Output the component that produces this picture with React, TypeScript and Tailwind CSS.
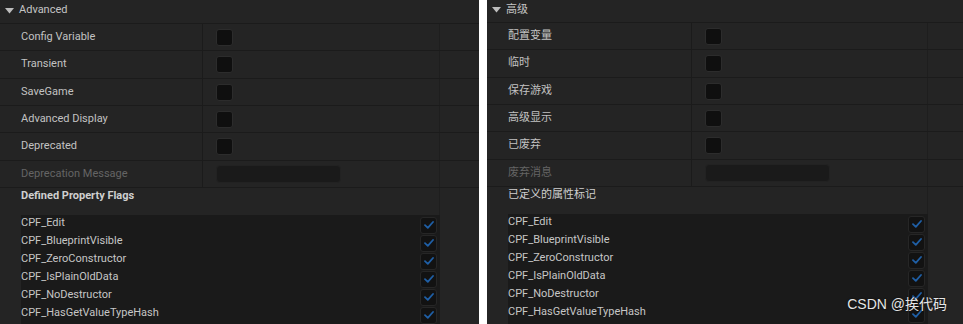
import React from "react";

type Row = { label: string; h: number; kind: "check" | "text"; muted?: boolean };

type PanelProps = {
  title: string;
  rows: Row[];
  flagsTitle: string;
  flagsBold?: boolean;
  flags: string[];
  width: number;
  labelW: number;
  valueW: number;
  headerH: number;
};

const font = { fontFamily: "Roboto, 'Noto Sans CJK SC', sans-serif" };

const CheckMark = () => (
  <svg width="10" height="8" viewBox="0 0 10 8" fill="none">
    <path d="M1 4.2 L3.8 6.8 L9 1" stroke="#1f5fa6" strokeWidth="1.8" strokeLinecap="round" strokeLinejoin="round" />
  </svg>
);

const Panel = ({ title, rows, flagsTitle, flagsBold, flags, width, labelW, valueW, headerH }: PanelProps) => {
  const cols = `${labelW}px ${valueW}px 1fr`;
  return (
    <div className="flex shrink-0 flex-col bg-[#242424] text-[11px]" style={{ width, ...font }}>
      <div
        className="flex items-center gap-[5px] border-b border-[#1b1b1b] pb-[2px] pl-[5px] text-[#c4c4c4]"
        style={{ height: headerH }}
      >
        <svg width="9" height="6" viewBox="0 0 9 6">
          <path d="M0 0 H9 L4.5 5.5 Z" fill="#bdbdbd" />
        </svg>
        <span>{title}</span>
      </div>

      {rows.map((row) => (
        <div
          key={row.label}
          className="grid border-b border-[#1b1b1b]"
          style={{ gridTemplateColumns: cols, height: row.h }}
        >
          <div
            className={`flex items-center border-r border-[#1b1b1b] pl-[21px] ${row.muted ? "text-[#656565]" : "text-[#c2c2c2]"}`}
          >
            {row.label}
          </div>
          <div className="flex items-center border-r border-[#1e1e1e] pl-[13px]">
            {row.kind === "check" ? (
              <div className="h-[17px] w-[17px] rounded-[3px] border border-[#2c2c2c] bg-[#0f0f0f]" />
            ) : (
              <div className="h-[18px] w-[125px] rounded-[4px] border border-[#222] bg-[#1a1a1a]" />
            )}
          </div>
          <div />
        </div>
      ))}

      <div className="grid h-[27px]" style={{ gridTemplateColumns: `${labelW + valueW}px 1fr` }}>
        <div className={`border-r border-[#1e1e1e] pl-[21px] text-[#cfcfcf] ${flagsBold ? "font-bold" : "font-normal"}`}>
          {flagsTitle}
        </div>
        <div />
      </div>

      <div className="grid flex-1" style={{ gridTemplateColumns: `${labelW + valueW}px 1fr` }}>
        <div className="ml-[21px] flex flex-col bg-[#1a1a1a] pt-[1px]">
          {flags.map((f) => (
            <div key={f} className="flex h-[18px] items-center justify-between pr-[3px] text-[#c6c6c6]">
              <span className="mb-[3px]">{f}</span>
              <div className="flex h-[17px] w-[17px] items-center justify-center rounded-[3px] border border-[#262626] bg-[#121212]">
                <CheckMark />
              </div>
            </div>
          ))}
        </div>
        <div />
      </div>
    </div>
  );
};

const flags = [
  "CPF_Edit",
  "CPF_BlueprintVisible",
  "CPF_ZeroConstructor",
  "CPF_IsPlainOldData",
  "CPF_NoDestructor",
  "CPF_HasGetValueTypeHash",
];

const enRows: Row[] = [
  { label: "Config Variable", h: 27, kind: "check" },
  { label: "Transient", h: 28, kind: "check" },
  { label: "SaveGame", h: 27, kind: "check" },
  { label: "Advanced Display", h: 27, kind: "check" },
  { label: "Deprecated", h: 28, kind: "check" },
  { label: "Deprecation Message", h: 27, kind: "text", muted: true },
];

const zhRows: Row[] = [
  { label: "配置变量", h: 27, kind: "check" },
  { label: "临时", h: 28, kind: "check" },
  { label: "保存游戏", h: 27, kind: "check" },
  { label: "高级显示", h: 27, kind: "check" },
  { label: "已废弃", h: 28, kind: "check" },
  { label: "废弃消息", h: 27, kind: "text", muted: true },
];

export default function App() {
  return (
    <div className="relative flex h-[324px] w-[963px] overflow-hidden bg-white">
      <Panel
        title="Advanced"
        rows={enRows}
        flagsTitle="Defined Property Flags"
        flagsBold
        flags={flags}
        width={479}
        labelW={203}
        valueW={237}
        headerH={24}
      />
      <div className="w-[8px] shrink-0 bg-white" />
      <Panel
        title="高级"
        rows={zhRows}
        flagsTitle="已定义的属性标记"
        flags={flags}
        width={476}
        labelW={205}
        valueW={236}
        headerH={23}
      />
      <div
        className="absolute bottom-[9px] right-[16px] text-[14px] text-[#e6e6e6] [text-shadow:0_0_2px_rgba(0,0,0,0.8)]"
        style={{ fontFamily: "'Liberation Sans', 'Noto Sans CJK SC', sans-serif" }}
      >
        CSDN @挨代码
      </div>
    </div>
  );
}
